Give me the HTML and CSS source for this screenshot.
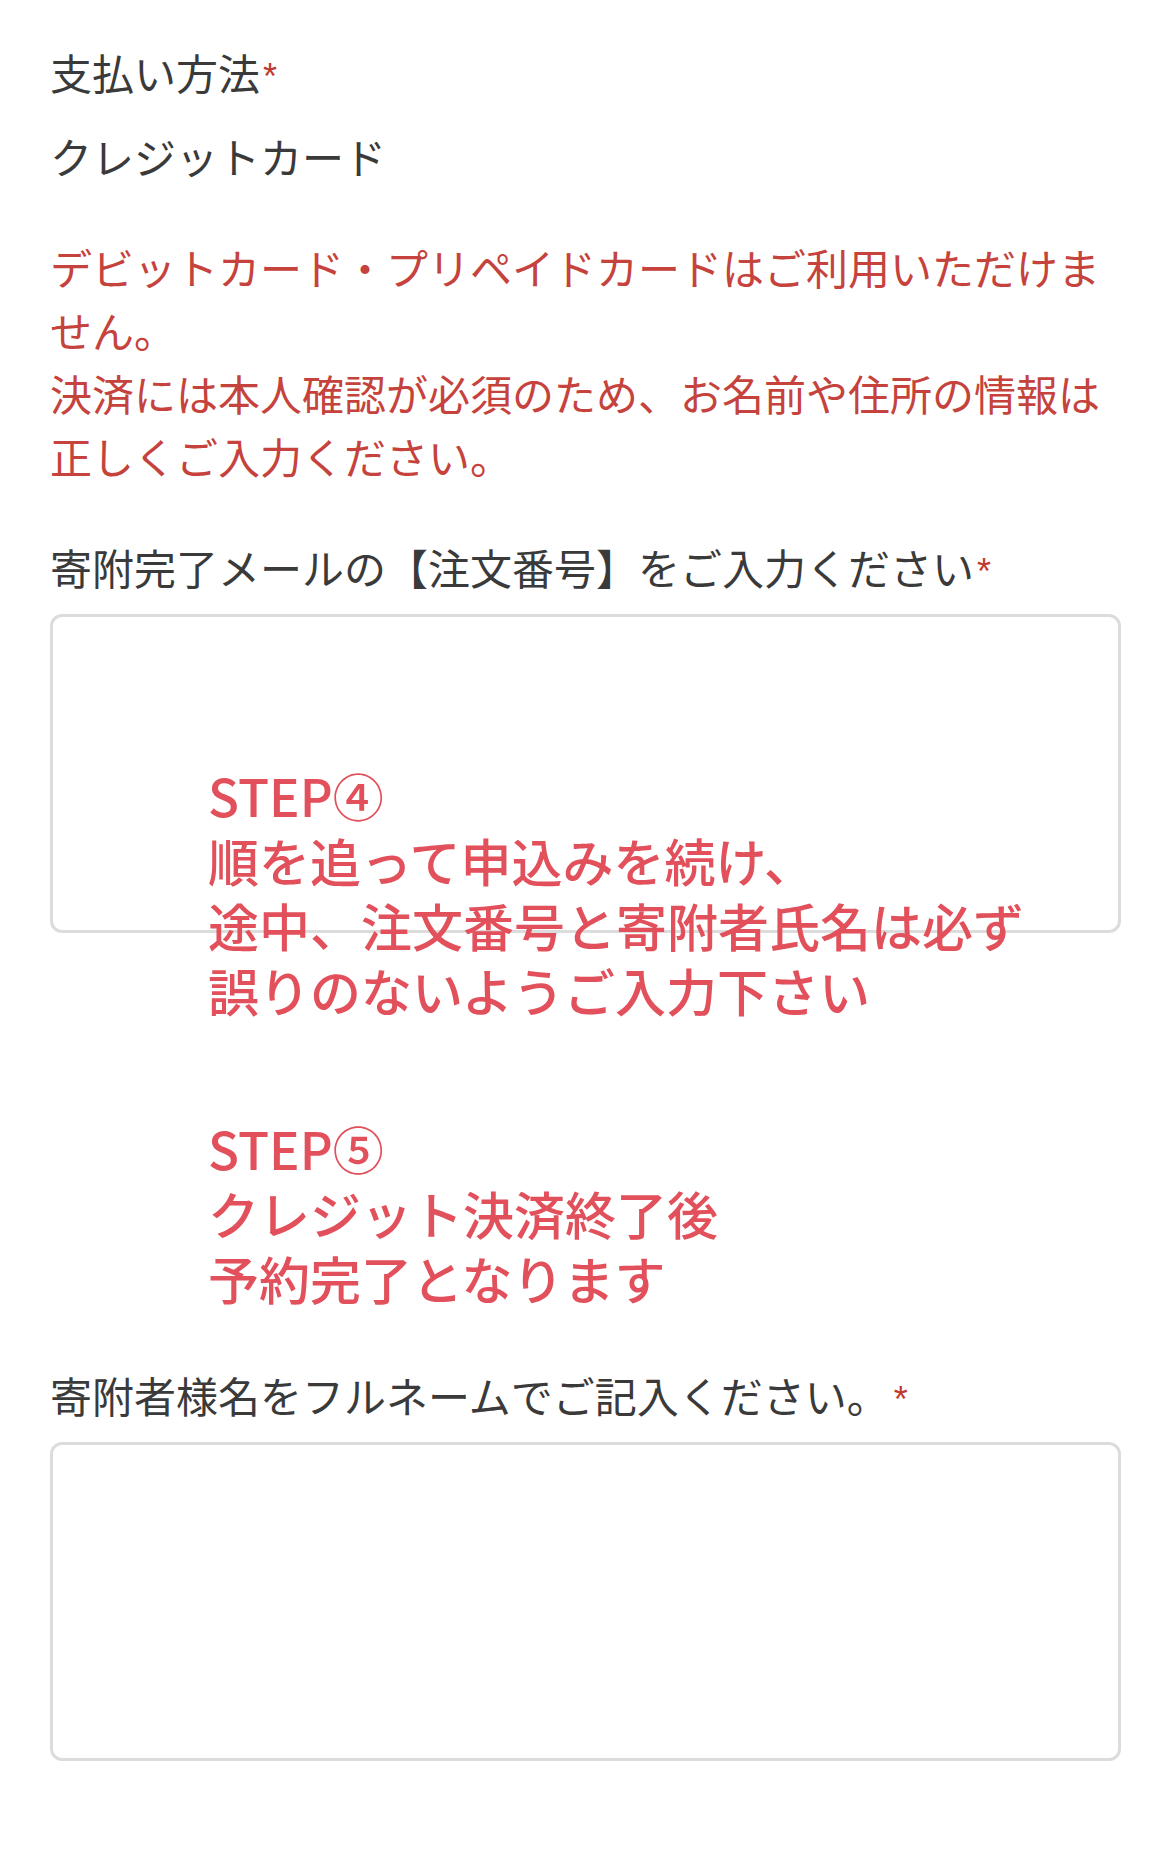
FILE: index.html
```html
<!DOCTYPE html>
<html lang="ja">
  <head>
    <meta charset="utf-8">
    <meta name="viewport" content="width=device-width, initial-scale=1">
    <title>お申込みフォーム</title>
    <link rel="stylesheet" href="styles.css">
  </head>

  <body>
    <form class="form">
      <div class="field field-first">
        <div class="label">支払い方法<span class="req">*</span></div>
        <div class="value">クレジットカード</div>
        <p class="notice">デビットカード・プリペイドカードはご利用いただけません。<br>決済には本人確認が必須のため、お名前や住所の情報は正しくご入力ください。</p>
      </div>

      <div class="field">
        <label class="label" for="order-no">寄附完了メールの【注文番号】をご入力ください<span class="req">*</span></label>
        <textarea id="order-no" class="input"></textarea>
        <div class="steps">
          <p>STEP④<br>順を追って申込みを続け、<br>途中、注文番号と寄附者氏名は必ず<br>誤りのないようご入力下さい</p>
          <p>STEP⑤<br>クレジット決済終了後<br>予約完了となります</p>
        </div>
      </div>

      <div class="field field-name">
        <label class="label" for="donor-name">寄附者様名をフルネームでご記入ください。<span class="req req-spaced">*</span></label>
        <textarea id="donor-name" class="input"></textarea>
      </div>
    </form>
  </body>
</html>
```

FILE: styles.css
```css
html, body {
  margin: 0;
  padding: 0;
  background: #fff;
}
body {
  font-family: "Noto Sans CJK JP", "Noto Sans", sans-serif;
  font-size: 42px;
  line-height: 63px;
  color: #3a3a3a;
}
.form {
  padding: 40px 49px 60px 50px;
}
.field {
  margin-top: 48px;
}
.field-first {
  margin-top: 0;
}
.field-name {
  margin-top: 52px;
}
.label {
  display: block;
}
.req {
  color: #c0392f;
  font-family: "Liberation Sans", sans-serif;
  font-size: 36px;
  vertical-align: 1px;
  margin-left: 3px;
}
.req-spaced {
  margin-left: 5px;
}
.value {
  margin-top: 16px;
}
.notice {
  margin: 48px 0 0;
  color: #c5433c;
}
.input {
  display: block;
  box-sizing: border-box;
  width: 100%;
  height: 319px;
  margin: 11px 0 0;
  padding: 0;
  border: 3px solid #dcdcdc;
  border-radius: 12px;
  background: #fff;
  resize: none;
  font: inherit;
}
.steps {
  margin-top: -170px;
  padding-left: 158px;
  color: #e2505b;
  font-size: 51px;
  font-weight: 500;
  line-height: 65px;
}
.steps p {
  margin: 0;
}
.steps p + p {
  margin-top: 93px;
}
```
